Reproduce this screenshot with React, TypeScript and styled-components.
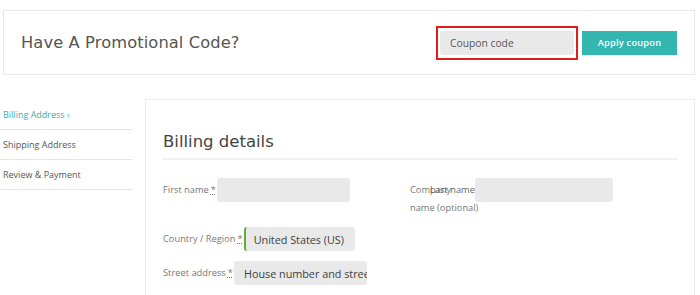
import React from "react";
import styled, { createGlobalStyle } from "styled-components";

const GlobalStyle = createGlobalStyle`
  body {
    margin: 0;
    background: #fff;
    font-family: "Open Sans", "Liberation Sans", sans-serif;
  }
`;

const Page = styled.div`
  width: 700px;
  height: 295px;
  overflow: hidden;
`;

const PromoBox = styled.div`
  margin: 10px 5px 0 3px;
  height: 63px;
  border: 1px solid #e7e7e7;
  display: flex;
  align-items: center;
  padding: 0 17px 0 17px;
`;

const PromoTitle = styled.h2`
  flex: 1;
  margin: 0;
  font-family: "DejaVu Sans", sans-serif;
  font-weight: 400;
  font-size: 16.3px;
  letter-spacing: 0.1px;
  color: #555;
`;

const Highlight = styled.div`
  border: 2px solid #e31b1b;
  padding: 3px 2px;
  margin-right: 4px;
`;

const FieldInput = styled.div<{ $w: number; $accent?: boolean }>`
  width: ${(p) => p.$w}px;
  height: 24px;
  box-sizing: border-box;
  background: #e9e9e9;
  border-radius: 3px;
  border-left: ${(p) => (p.$accent ? "2px solid #5fae3c" : "none")};
  display: flex;
  align-items: center;
  padding-left: ${(p) => (p.$accent ? 8 : 10)}px;
  font-size: 10.8px;
  color: #3e3e3e;
  white-space: nowrap;
  overflow: hidden;
  flex-shrink: 0;
`;

const CouponInput = styled(FieldInput)`
  font-size: 10.3px;
  color: #555;
`;

const ApplyButton = styled.button`
  width: 95px;
  height: 24px;
  border: none;
  background: #33b5b0;
  color: #fff;
  font-family: "Open Sans", sans-serif;
  font-size: 9.3px;
  font-weight: 600;
  letter-spacing: 0.2px;
`;

const Checkout = styled.div`
  display: flex;
  margin-top: 24px;
`;

const Steps = styled.ul`
  list-style: none;
  margin: 1px 0 0 0;
  padding: 0;
  width: 132px;
  flex-shrink: 0;
`;

const Step = styled.li<{ $active?: boolean }>`
  height: 30px;
  box-sizing: border-box;
  border-bottom: 1px solid #e4e4e4;
  padding: 8px 0 0 3px;
  font-size: 9px;
  color: ${(p) => (p.$active ? "#3bb0ab" : "#555")};
`;

const Panel = styled.div`
  flex: 1;
  margin-left: 13px;
  margin-right: 5px;
  border: 1px solid #ececec;
  border-bottom: none;
  padding: 32px 17px 0 17px;
  height: 200px;
`;

const PanelTitle = styled.h3`
  margin: 0;
  font-family: "DejaVu Sans", sans-serif;
  font-weight: 400;
  font-size: 16.5px;
  color: #444;
  padding-bottom: 7px;
  border-bottom: 2px solid #f0f0f0;
`;

const Grid = styled.div`
  display: grid;
  grid-template-columns: 247px 1fr;
  row-gap: 10px;
  margin-top: 18px;
`;

const Field = styled.div`
  display: flex;
  align-items: flex-start;
  position: relative;
`;

const Label = styled.label<{ $w?: number }>`
  font-size: 9.3px;
  color: #777;
  line-height: 18px;
  padding-top: 3px;
  margin-right: 1px;
  width: ${(p) => (p.$w ? `${p.$w}px` : "auto")};
  white-space: nowrap;
  flex-shrink: 0;
`;

const Required = styled.abbr`
  text-decoration: underline dotted;
  margin-left: 2px;
`;

const OverLabel = styled.span`
  position: absolute;
  left: 20px;
  top: 3px;
  font-size: 9.3px;
  line-height: 18px;
  color: #666;
`;

export default function App() {
  return (
    <Page>
      <GlobalStyle />
      <PromoBox>
        <PromoTitle>Have A Promotional Code?</PromoTitle>
        <Highlight>
          <CouponInput $w={134}>Coupon code</CouponInput>
        </Highlight>
        <ApplyButton>Apply coupon</ApplyButton>
      </PromoBox>
      <Checkout>
        <Steps>
          <Step $active>Billing Address ›</Step>
          <Step>Shipping Address</Step>
          <Step>Review &amp; Payment</Step>
        </Steps>
        <Panel>
          <PanelTitle>Billing details</PanelTitle>
          <Grid>
            <Field>
              <Label>
                First name<Required>*</Required>
              </Label>
              <FieldInput $w={133} />
            </Field>
            <Field>
              <Label $w={64}>
                Company
                <br />
                name (optional)
              </Label>
              <OverLabel>Last name</OverLabel>
              <FieldInput $w={138} />
            </Field>
            <Field>
              <Label>
                Country / Region<Required>*</Required>
              </Label>
              <FieldInput $w={111} $accent>
                United States (US)
              </FieldInput>
            </Field>
            <div />
            <Field>
              <Label>
                Street address<Required>*</Required>
              </Label>
              <FieldInput $w={133}>House number and street name</FieldInput>
            </Field>
          </Grid>
        </Panel>
      </Checkout>
    </Page>
  );
}
